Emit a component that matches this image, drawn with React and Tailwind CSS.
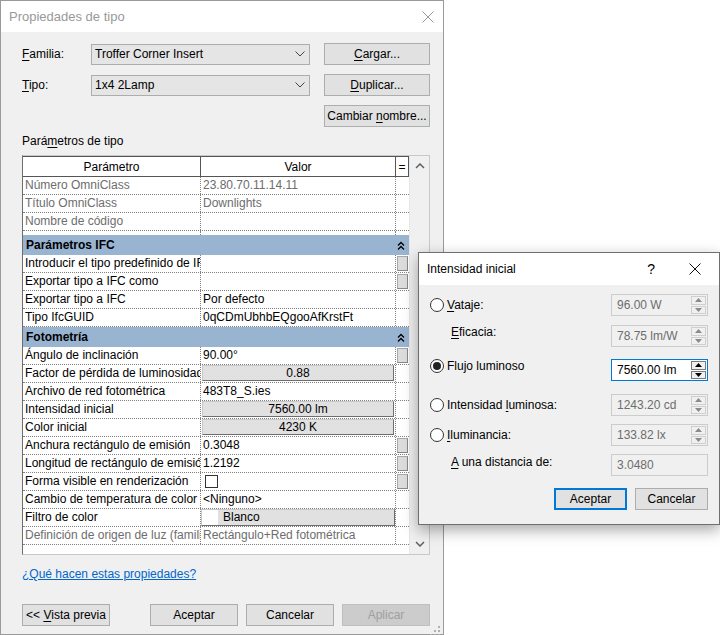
import React from 'react';

const U = ({ children }) => <span className="underline underline-offset-2">{children}</span>;

function ComboChevron() {
  return (
    <svg width="10" height="6" viewBox="0 0 10 6">
      <path d="M0.5 0.5 L5 5 L9.5 0.5" stroke="#444" strokeWidth="1" fill="none" />
    </svg>
  );
}

function CloseX({ color = '#999' }) {
  return (
    <svg width="12" height="12" viewBox="0 0 12 12">
      <path d="M0.5 0.5 L11.5 11.5 M11.5 0.5 L0.5 11.5" stroke={color} strokeWidth="1" fill="none" />
    </svg>
  );
}

function DoubleUp() {
  return (
    <svg width="8" height="9" viewBox="0 0 8 9">
      <path d="M1 4.5 L4 1.5 L7 4.5 M1 8.5 L4 5.5 L7 8.5" stroke="#000" strokeWidth="1.3" fill="none" />
    </svg>
  );
}

function WinButton({ children, className = '' }) {
  return (
    <div className={`h-[22px] flex items-center justify-center bg-[#e1e1e1] border border-[#adadad] text-black ${className}`}>
      <span>{children}</span>
    </div>
  );
}

function Combo({ value }) {
  return (
    <div className="w-[219px] h-[21px] flex items-center justify-between pl-[3px] pr-[4px] bg-[#e5e5e5] border border-[#adadad]">
      <span>{value}</span>
      <ComboChevron />
    </div>
  );
}

const section1 = [
  { p: 'Número OmniClass', v: '23.80.70.11.14.11', dim: true },
  { p: 'Título OmniClass', v: 'Downlights', dim: true },
  { p: 'Nombre de código', v: '', dim: true },
];

const section2 = [
  { p: 'Introducir el tipo predefinido de IFC', v: '', eq: true },
  { p: 'Exportar tipo a IFC como', v: '', eq: true },
  { p: 'Exportar tipo a IFC', v: 'Por defecto' },
  { p: 'Tipo IfcGUID', v: '0qCDmUbhbEQgooAfKrstFt' },
];

const section3 = [
  { p: 'Ángulo de inclinación', v: '90.00°', eq: true },
  { p: 'Factor de pérdida de luminosidad', v: '0.88', btn: true },
  { p: 'Archivo de red fotométrica', v: '483T8_S.ies' },
  { p: 'Intensidad inicial', v: '7560.00 lm', btn: true },
  { p: 'Color inicial', v: '4230 K', btn: true },
  { p: 'Anchura rectángulo de emisión', v: '0.3048', eq: true },
  { p: 'Longitud de rectángulo de emisión', v: '1.2192', eq: true },
  { p: 'Forma visible en renderización', check: true, eq: true },
  { p: 'Cambio de temperatura de color', v: '<Ninguno>' },
  { p: 'Filtro de color', v: 'Blanco', swatch: true },
  { p: 'Definición de origen de luz (familia)', v: 'Rectángulo+Red fotométrica', dim: true },
];

function Row({ r }) {
  const txt = r.dim ? 'text-[#6d6d6d]' : 'text-black';
  return (
    <div className="flex h-[18px] border-b border-dotted border-[#808080]">
      <div className={`w-[178px] shrink-0 pl-[2px] overflow-hidden whitespace-nowrap leading-[17px] border-r border-dotted border-[#808080] ${txt}`}>
        {r.p}
      </div>
      <div className={`w-[195px] shrink-0 overflow-hidden whitespace-nowrap leading-[17px] border-r border-dotted border-[#808080] ${txt}`}>
        {r.btn ? (
          <div className="h-[16px] mx-[1px] flex items-center justify-center bg-[#e1e1e1] border border-[#6e6e6e] border-t-[#c8c8c8] border-l-[#c8c8c8]">
            {r.v}
          </div>
        ) : r.swatch ? (
          <div className="h-[17px] flex items-center bg-[#e1e1e1] border border-[#6e6e6e] border-t-[#c8c8c8] border-l-[#c8c8c8]">
            <div className="w-[16px] h-full bg-white" />
            <span className="pl-[5px]">{r.v}</span>
          </div>
        ) : r.check ? (
          <div className="pl-[4px] pt-[2px]">
            <div className="w-[13px] h-[13px] bg-white border border-[#333]" />
          </div>
        ) : (
          <span className="pl-[2px]">{r.v}</span>
        )}
      </div>
      <div className="w-[13px] shrink-0 flex items-start justify-center pt-[1px]">
        {r.eq && <div className="w-[11px] h-[15px] bg-[#dcdcdc] border border-[#a8a8a8] border-r-[#888] border-b-[#888]" />}
      </div>
    </div>
  );
}

function Group({ title }) {
  return (
    <div className="flex h-[20px] items-center bg-[#99b4d1] font-bold text-black">
      <div className="flex-1 pl-[3px] leading-[20px]">{title}</div>
      <div className="w-[13px] flex justify-start pl-[1px]">
        <DoubleUp />
      </div>
    </div>
  );
}

function Spinner({ active }) {
  const tri = active ? '#000' : '#8a8a8a';
  const bd = active ? 'border-[#7a7a7a]' : 'border-[#cfcfcf]';
  return (
    <div className="w-[16px] flex flex-col gap-[1px] py-[1px] pr-[1px]">
      <div className={`flex-1 flex items-center justify-center bg-[#f0f0f0] border ${bd}`}>
        <svg width="7" height="4" viewBox="0 0 7 4"><path d="M0 4 L3.5 0 L7 4 Z" fill={tri} /></svg>
      </div>
      <div className={`flex-1 flex items-center justify-center bg-[#f0f0f0] border ${bd}`}>
        <svg width="7" height="4" viewBox="0 0 7 4"><path d="M0 0 L3.5 4 L7 0 Z" fill={tri} /></svg>
      </div>
    </div>
  );
}

function NumField({ value, active, spin = true }) {
  return (
    <div
      className={`w-[97px] h-[22px] flex border ${
        active ? 'bg-white border-[#0078d7] text-black' : 'bg-[#f0f0f0] border-[#cccccc] text-[#6d6d6d]'
      }`}
    >
      <div className="flex-1 pl-[5px] flex items-center">{value}</div>
      {spin && <Spinner active={active} />}
    </div>
  );
}

function Radio({ checked }) {
  return (
    <div className="w-[14px] h-[14px] rounded-full border border-[#333] bg-white flex items-center justify-center shrink-0">
      {checked && <div className="w-[8px] h-[8px] rounded-full bg-[#222]" />}
    </div>
  );
}

function IntensityDialog() {
  return (
    <div className="absolute left-[418px] top-[252px] w-[302px] h-[273px] border border-[#6f6f6f] bg-[#f0f0f0] shadow-[0_5px_14px_rgba(0,0,0,0.35)]">
      <div className="h-[32px] bg-white flex items-center pl-[8px] pr-[18px]">
        <span className="flex-1 text-black">Intensidad inicial</span>
        <span className="text-black text-[14px] mr-[34px]">?</span>
        <CloseX color="#111" />
      </div>
      <div className="px-[11px] pt-[9px]">
        <div className="flex items-center justify-between h-[22px]">
          <div className="flex items-center gap-[3px]">
            <Radio />
            <span><U>V</U>ataje:</span>
          </div>
          <NumField value="96.00 W" />
        </div>
        <div className="flex items-center justify-between h-[22px] mt-[9px]">
          <span className="pl-[21px] -translate-y-[4px]"><U>E</U>ficacia:</span>
          <NumField value="78.75 lm/W" />
        </div>
        <div className="flex items-center justify-between h-[22px] mt-[12px]">
          <div className="flex items-center gap-[3px] -translate-y-[4px]">
            <Radio checked />
            <span>Flujo luminoso</span>
          </div>
          <NumField value="7560.00 lm" active />
        </div>
        <div className="flex items-center justify-between h-[22px] mt-[13px]">
          <div className="flex items-center gap-[3px]">
            <Radio />
            <span>Intensidad <U>l</U>uminosa:</span>
          </div>
          <NumField value="1243.20 cd" />
        </div>
        <div className="flex items-center justify-between h-[22px] mt-[8px]">
          <div className="flex items-center gap-[3px]">
            <Radio />
            <span><U>I</U>luminancia:</span>
          </div>
          <NumField value="133.82 lx" />
        </div>
        <div className="flex items-center justify-between h-[22px] mt-[8px]">
          <span className="pl-[21px] -translate-y-[3px]"><U>A</U> una distancia de:</span>
          <NumField value="3.0480" spin={false} />
        </div>
        <div className="flex justify-end gap-[8px] mt-[12px]">
          <div className="w-[73px] h-[22px] flex items-center justify-center bg-[#e1e1e1] border-2 border-[#0078d7]">Aceptar</div>
          <WinButton className="w-[73px]">Cancelar</WinButton>
        </div>
      </div>
    </div>
  );
}

export default function App() {
  return (
    <div className="relative w-[720px] h-[635px] bg-white overflow-hidden text-[12px] text-black font-['Liberation_Sans',Arial,sans-serif]">
      <div className="w-[444px] h-[635px] flex flex-col border border-[#9a9a9a] bg-[#f0f0f0]">
        <div className="h-[31px] shrink-0 bg-white flex items-center justify-between pl-[8px] pr-[9px]">
          <span className="text-[#999999] text-[13px]">Propiedades de tipo</span>
          <CloseX />
        </div>

        <div className="flex-1 flex flex-col pl-[21px] pr-[13px] pt-[11px]">
          <div className="flex items-center h-[22px]">
            <span className="w-[69px]"><U>F</U>amilia:</span>
            <Combo value="Troffer Corner Insert" />
            <WinButton className="w-[106px] ml-[14px]"><U>C</U>argar...</WinButton>
          </div>
          <div className="flex items-center h-[22px] mt-[9px]">
            <span className="w-[69px]"><U>T</U>ipo:</span>
            <Combo value="1x4 2Lamp" />
            <WinButton className="w-[106px] ml-[14px]"><U>D</U>uplicar...</WinButton>
          </div>
          <div className="flex justify-end h-[22px] mt-[9px]">
            <WinButton className="w-[106px]">Cambiar <U>n</U>ombre...</WinButton>
          </div>

          <div className="mt-[7px] h-[15px] leading-[15px]">Pará<U>m</U>etros de tipo</div>

          <div className="mt-[6px] w-[408px] h-[400px] flex bg-white border border-[#c8c8c8] border-l-[#6e6e6e]">
            <div className="w-[386px] flex flex-col">
              <div className="flex h-[21px] border-b border-t border-[#555] bg-white">
                <div className="w-[178px] border-r border-[#555] flex items-center justify-center">Parámetro</div>
                <div className="w-[195px] border-r border-[#555] flex items-center justify-center">Valor</div>
                <div className="w-[13px] border-r border-[#555] flex items-center justify-center">=</div>
              </div>
              {section1.map((r) => <Row key={r.p} r={r} />)}
              <div className="flex h-[4px]">
                <div className="w-[178px] border-r border-dotted border-[#808080]" />
                <div className="w-[195px] border-r border-dotted border-[#808080]" />
              </div>
              <Group title="Parámetros IFC" />
              {section2.map((r) => <Row key={r.p} r={r} />)}
              <Group title="Fotometría" />
              {section3.map((r) => <Row key={r.p} r={r} />)}
            </div>
            <div className="flex-1 flex flex-col items-center justify-between bg-[#f0f0f0] border-l border-[#e6e6e6] py-[7px]">
              <svg width="10" height="6" viewBox="0 0 10 6">
                <path d="M1 5 L5 1 L9 5" stroke="#606060" strokeWidth="1.5" fill="none" />
              </svg>
              <svg width="10" height="6" viewBox="0 0 10 6">
                <path d="M1 1 L5 5 L9 1" stroke="#606060" strokeWidth="1.5" fill="none" />
              </svg>
            </div>
          </div>

          <div className="mt-[12px] h-[15px] leading-[15px]">
            <span className="text-[#0066cc] underline">¿Qué hacen estas propiedades?</span>
          </div>

          <div className="flex items-center mt-[22px]">
            <WinButton className="w-[88px]">&lt;&lt; <U>V</U>ista previa</WinButton>
            <WinButton className="w-[88px] ml-[40px]">Aceptar</WinButton>
            <WinButton className="w-[88px] ml-[8px]">Cancelar</WinButton>
            <div className="w-[88px] ml-[8px] h-[22px] flex items-center justify-center bg-[#cccccc] border border-[#bfbfbf] text-[#a0a0a0]">Aplicar</div>
          </div>

          <div className="flex justify-end mt-auto mb-[2px] -mr-[10px]">
            <svg width="10" height="10" viewBox="0 0 10 10">
              <g fill="#b0b0b0">
                <rect x="8" y="0" width="2" height="2" />
                <rect x="4" y="4" width="2" height="2" />
                <rect x="8" y="4" width="2" height="2" />
                <rect x="0" y="8" width="2" height="2" />
                <rect x="4" y="8" width="2" height="2" />
                <rect x="8" y="8" width="2" height="2" />
              </g>
            </svg>
          </div>
        </div>
      </div>

      <IntensityDialog />
    </div>
  );
}
